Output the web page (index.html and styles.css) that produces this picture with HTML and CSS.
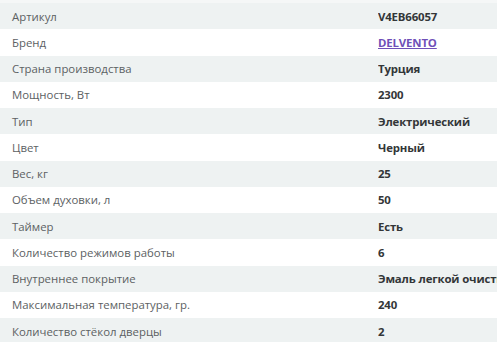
FILE: index.html
```html
<!DOCTYPE html>
<html lang="ru">
<head>
<meta charset="utf-8">
<link rel="stylesheet" href="styles.css">
</head>
<body>
<div class="wrap">
  <div class="top"></div>
  <div class="table">
    <div class="row"><div class="label">Артикул</div><div class="value">V4EB66057</div></div>
    <div class="row"><div class="label">Бренд</div><div class="value"><a class="link" href="#">DELVENTO</a></div></div>
    <div class="row"><div class="label">Страна производства</div><div class="value">Турция</div></div>
    <div class="row"><div class="label">Мощность, Вт</div><div class="value">2300</div></div>
    <div class="row"><div class="label">Тип</div><div class="value">Электрический</div></div>
    <div class="row"><div class="label">Цвет</div><div class="value">Черный</div></div>
    <div class="row"><div class="label">Вес, кг</div><div class="value">25</div></div>
    <div class="row"><div class="label">Объем духовки, л</div><div class="value">50</div></div>
    <div class="row"><div class="label">Таймер</div><div class="value">Есть</div></div>
    <div class="row"><div class="label">Количество режимов работы</div><div class="value">6</div></div>
    <div class="row"><div class="label">Внутреннее покрытие</div><div class="value">Эмаль легкой очистки</div></div>
    <div class="row"><div class="label">Максимальная температура, гр.</div><div class="value">240</div></div>
    <div class="row"><div class="label">Количество стёкол дверцы</div><div class="value">2</div></div>
  </div>
</div>
</body>
</html>
```
FILE: styles.css
```css
html, body {
  margin: 0;
  padding: 0;
  background: #ffffff;
}
.wrap {
  width: 497px;
  height: 342px;
  overflow: hidden;
  font-family: "Open Sans", "Noto Sans", sans-serif;
  font-size: 11.4px;
}
.top {
  height: 3px;
  background: #f5f7f7;
}
.row {
  display: grid;
  grid-template-columns: 366px 1fr;
  height: 26.25px;
  align-items: center;
  padding-left: 12px;
  white-space: nowrap;
}
.row:nth-child(odd) {
  background: #eef2f2;
}
.label {
  color: #5c6163;
}
.value {
  color: #333638;
  font-weight: 700;
  letter-spacing: -0.15px;
  overflow: hidden;
}
.link {
  color: #6f4fb8;
  text-decoration: underline;
}
```
